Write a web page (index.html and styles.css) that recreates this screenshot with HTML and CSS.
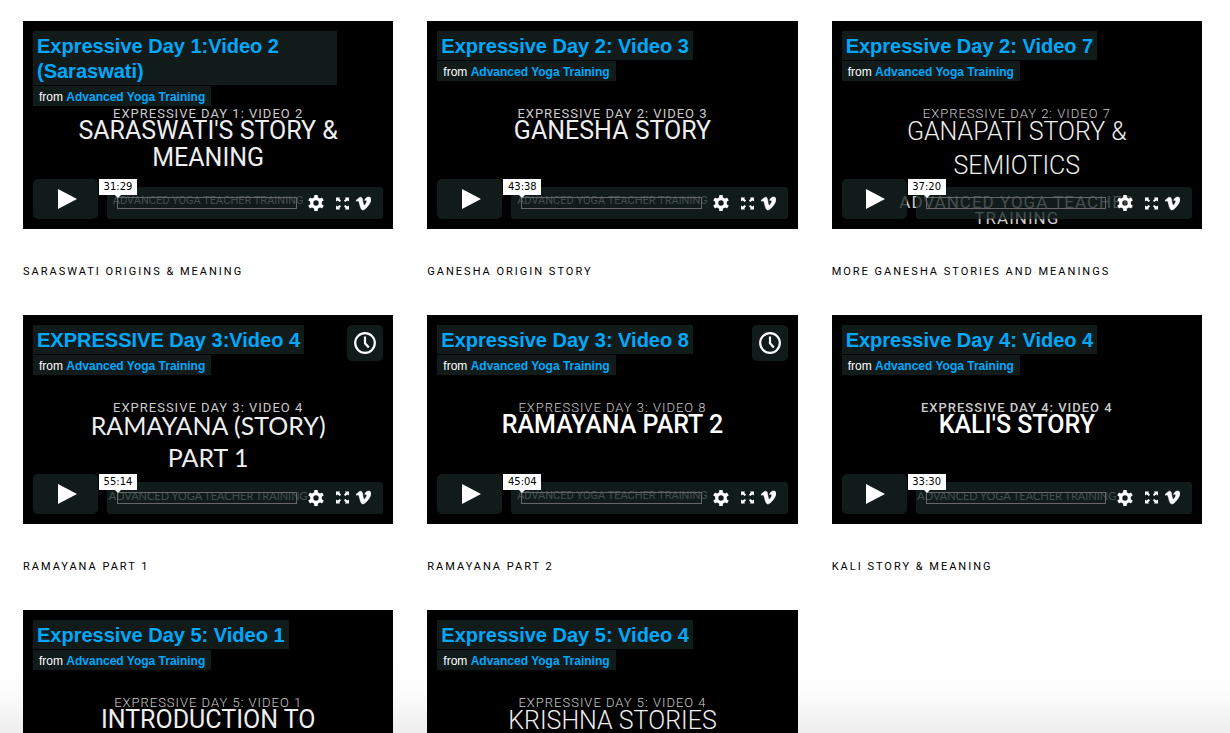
FILE: index.html
```html
<!DOCTYPE html>
<html lang="en">
<head>
<meta charset="utf-8">
<title>Advanced Yoga Training</title>
<link rel="stylesheet" href="styles.css">
</head>
<body>
<svg class="sprite" aria-hidden="true">
  <symbol id="play" viewBox="0 0 20 20"><path d="M0 0L19 10L0 20z"/></symbol>
  <symbol id="gear" viewBox="0 0 16 16">
    <circle cx="8" cy="8" r="4.3" fill="none" stroke="currentColor" stroke-width="3.2"/>
    <g id="teeth"><rect x="6.2" y="0" width="3.6" height="3.6" rx=".6"/><rect x="6.2" y="12.4" width="3.6" height="3.6" rx=".6"/></g>
    <use href="#teeth" transform="rotate(60 8 8)"/>
    <use href="#teeth" transform="rotate(120 8 8)"/>
  </symbol>
  <symbol id="expand" viewBox="0 0 13 13">
    <path d="M0 0.5h4L3.3 1.8 5 3.8 3.8 5 1.6 3.4 0 4.4zM13 0.5v3.9L11.4 3.4 9.2 5 8 3.8 9.7 1.8 9 0.5zM13 12.5H9L9.7 11.2 8 9.2 9.2 8 11.4 9.6 13 8.6zM0 12.5V8.6L1.6 9.6 3.8 8 5 9.2 3.3 11.2 4 12.5z"/>
  </symbol>
  <symbol id="vimeo" viewBox="0 0 24 24"><path stroke="currentColor" stroke-width=".8" d="M23.9765 6.4168c-.105 2.338-1.739 5.5429-4.894 9.6088-3.2679 4.247-6.0258 6.3699-8.2898 6.3699-1.409 0-2.578-1.294-3.553-3.881l-1.9179-7.1138c-.719-2.584-1.488-3.878-2.312-3.878-.179 0-.806.378-1.8809 1.132l-1.129-1.457a315.06 315.06 0 003.501-3.1279c1.579-1.368 2.765-2.085 3.5539-2.159 1.867-.18 3.016 1.1 3.447 3.838.465 2.953.789 4.789.971 5.5069.5389 2.45 1.1309 3.674 1.7759 3.674.502 0 1.256-.796 2.265-2.385 1.004-1.589 1.54-2.797 1.612-3.628.144-1.371-.395-2.061-1.614-2.061-.574 0-1.167.121-1.777.391 1.186-3.8679 3.434-5.7568 6.7619-5.6368 2.4729.06 3.6279 1.664 3.4929 4.7969z"/></symbol>
  <symbol id="clock" viewBox="0 0 22 22"><g fill="none" stroke="currentColor" stroke-width="2.2"><circle cx="11" cy="11" r="9.8"/><path d="M11 4.5V11.3L14.8 15.6"/></g></symbol>
</svg>

<main class="grid">
  <article class="item">
    <section class="player">
      <div class="thumb">
        <p class="eyebrow">EXPRESSIVE DAY 1: VIDEO 2</p>
        <p class="headline">SARASWATI'S STORY &amp;<br>MEANING</p>
        <p class="footer">ADVANCED YOGA TEACHER TRAINING</p>
      </div>
      <header class="top">
        <div class="titles">
          <h2 class="title"><a href="#">Expressive Day 1:Video 2 (Saraswati)</a></h2>
          <p class="byline">from <a href="#">Advanced Yoga Training</a></p>
        </div>
      </header>
      <div class="controls">
        <button class="play" aria-label="Play"><svg class="i-play"><use href="#play"/></svg></button>
        <div class="bar">
          <div class="progress"><span class="time">31:29</span></div>
          <button class="gear" aria-label="Settings"><svg class="i-gear"><use href="#gear"/></svg></button>
          <button class="expand" aria-label="Fullscreen"><svg class="i-expand"><use href="#expand"/></svg></button>
          <a class="vimeo" href="#" aria-label="Vimeo"><svg class="i-vimeo"><use href="#vimeo"/></svg></a>
        </div>
      </div>
    </section>
    <p class="caption">SARASWATI ORIGINS &amp; MEANING</p>
  </article>

  <article class="item">
    <section class="player">
      <div class="thumb">
        <p class="eyebrow">EXPRESSIVE DAY 2: VIDEO 3</p>
        <p class="headline">GANESHA STORY</p>
        <p class="footer">ADVANCED YOGA TEACHER TRAINING</p>
      </div>
      <header class="top">
        <div class="titles">
          <h2 class="title"><a href="#">Expressive Day 2: Video 3</a></h2>
          <p class="byline">from <a href="#">Advanced Yoga Training</a></p>
        </div>
      </header>
      <div class="controls">
        <button class="play" aria-label="Play"><svg class="i-play"><use href="#play"/></svg></button>
        <div class="bar">
          <div class="progress"><span class="time">43:38</span></div>
          <button class="gear" aria-label="Settings"><svg class="i-gear"><use href="#gear"/></svg></button>
          <button class="expand" aria-label="Fullscreen"><svg class="i-expand"><use href="#expand"/></svg></button>
          <a class="vimeo" href="#" aria-label="Vimeo"><svg class="i-vimeo"><use href="#vimeo"/></svg></a>
        </div>
      </div>
    </section>
    <p class="caption">GANESHA ORIGIN STORY</p>
  </article>

  <article class="item">
    <section class="player">
      <div class="thumb light open large-footer">
        <p class="eyebrow">EXPRESSIVE DAY 2: VIDEO 7</p>
        <p class="headline">GANAPATI STORY &amp;<br>SEMIOTICS</p>
        <p class="footer">ADVANCED YOGA TEACHER<br>TRAINING</p>
      </div>
      <header class="top">
        <div class="titles">
          <h2 class="title"><a href="#">Expressive Day 2: Video 7</a></h2>
          <p class="byline">from <a href="#">Advanced Yoga Training</a></p>
        </div>
      </header>
      <div class="controls">
        <button class="play" aria-label="Play"><svg class="i-play"><use href="#play"/></svg></button>
        <div class="bar">
          <div class="progress"><span class="time">37:20</span></div>
          <button class="gear" aria-label="Settings"><svg class="i-gear"><use href="#gear"/></svg></button>
          <button class="expand" aria-label="Fullscreen"><svg class="i-expand"><use href="#expand"/></svg></button>
          <a class="vimeo" href="#" aria-label="Vimeo"><svg class="i-vimeo"><use href="#vimeo"/></svg></a>
        </div>
      </div>
    </section>
    <p class="caption">MORE GANESHA STORIES AND MEANINGS</p>
  </article>

  <article class="item">
    <section class="player">
      <div class="thumb humanist">
        <p class="eyebrow">EXPRESSIVE DAY 3: VIDEO 4</p>
        <p class="headline">RAMAYANA (STORY)<br>PART 1</p>
        <p class="footer">ADVANCED YOGA TEACHER TRAINING</p>
      </div>
      <header class="top">
        <div class="titles">
          <h2 class="title"><a href="#">EXPRESSIVE Day 3:Video 4</a></h2>
          <p class="byline">from <a href="#">Advanced Yoga Training</a></p>
        </div>
        <button class="later" aria-label="Watch later"><svg class="i-clock"><use href="#clock"/></svg></button>
      </header>
      <div class="controls">
        <button class="play" aria-label="Play"><svg class="i-play"><use href="#play"/></svg></button>
        <div class="bar">
          <div class="progress"><span class="time">55:14</span></div>
          <button class="gear" aria-label="Settings"><svg class="i-gear"><use href="#gear"/></svg></button>
          <button class="expand" aria-label="Fullscreen"><svg class="i-expand"><use href="#expand"/></svg></button>
          <a class="vimeo" href="#" aria-label="Vimeo"><svg class="i-vimeo"><use href="#vimeo"/></svg></a>
        </div>
      </div>
    </section>
    <p class="caption">RAMAYANA PART 1</p>
  </article>

  <article class="item">
    <section class="player">
      <div class="thumb strong light-eyebrow">
        <p class="eyebrow">EXPRESSIVE DAY 3: VIDEO 8</p>
        <p class="headline">RAMAYANA PART 2</p>
        <p class="footer">ADVANCED YOGA TEACHER TRAINING</p>
      </div>
      <header class="top">
        <div class="titles">
          <h2 class="title"><a href="#">Expressive Day 3: Video 8</a></h2>
          <p class="byline">from <a href="#">Advanced Yoga Training</a></p>
        </div>
        <button class="later" aria-label="Watch later"><svg class="i-clock"><use href="#clock"/></svg></button>
      </header>
      <div class="controls">
        <button class="play" aria-label="Play"><svg class="i-play"><use href="#play"/></svg></button>
        <div class="bar">
          <div class="progress"><span class="time">45:04</span></div>
          <button class="gear" aria-label="Settings"><svg class="i-gear"><use href="#gear"/></svg></button>
          <button class="expand" aria-label="Fullscreen"><svg class="i-expand"><use href="#expand"/></svg></button>
          <a class="vimeo" href="#" aria-label="Vimeo"><svg class="i-vimeo"><use href="#vimeo"/></svg></a>
        </div>
      </div>
    </section>
    <p class="caption">RAMAYANA PART 2</p>
  </article>

  <article class="item">
    <section class="player">
      <div class="thumb strong humanist-footer">
        <p class="eyebrow">EXPRESSIVE DAY 4: VIDEO 4</p>
        <p class="headline">KALI'S STORY</p>
        <p class="footer">ADVANCED YOGA TEACHER TRAINING</p>
      </div>
      <header class="top">
        <div class="titles">
          <h2 class="title"><a href="#">Expressive Day 4: Video 4</a></h2>
          <p class="byline">from <a href="#">Advanced Yoga Training</a></p>
        </div>
      </header>
      <div class="controls">
        <button class="play" aria-label="Play"><svg class="i-play"><use href="#play"/></svg></button>
        <div class="bar">
          <div class="progress"><span class="time">33:30</span></div>
          <button class="gear" aria-label="Settings"><svg class="i-gear"><use href="#gear"/></svg></button>
          <button class="expand" aria-label="Fullscreen"><svg class="i-expand"><use href="#expand"/></svg></button>
          <a class="vimeo" href="#" aria-label="Vimeo"><svg class="i-vimeo"><use href="#vimeo"/></svg></a>
        </div>
      </div>
    </section>
    <p class="caption">KALI STORY &amp; MEANING</p>
  </article>

  <article class="item">
    <section class="player">
      <div class="thumb light-eyebrow">
        <p class="eyebrow">EXPRESSIVE DAY 5: VIDEO 1</p>
        <p class="headline">INTRODUCTION TO</p>
      </div>
      <header class="top">
        <div class="titles">
          <h2 class="title"><a href="#">Expressive Day 5: Video 1</a></h2>
          <p class="byline">from <a href="#">Advanced Yoga Training</a></p>
        </div>
      </header>
    </section>
  </article>

  <article class="item">
    <section class="player">
      <div class="thumb light open">
        <p class="eyebrow">EXPRESSIVE DAY 5: VIDEO 4</p>
        <p class="headline">KRISHNA STORIES</p>
      </div>
      <header class="top">
        <div class="titles">
          <h2 class="title"><a href="#">Expressive Day 5: Video 4</a></h2>
          <p class="byline">from <a href="#">Advanced Yoga Training</a></p>
        </div>
      </header>
    </section>
  </article>
</main>
</body>
</html>
```
FILE: styles.css
```css
:root {
  --panel: rgba(21, 36, 35, .75);
  --link: #00a8fa;
}
* { box-sizing: border-box; }
html {
  background: linear-gradient(#fff calc(100% - 72px), #fcfcfc calc(100% - 40px), #eee) fixed;
}
body { margin: 0; font-family: Roboto, sans-serif; }
p, h2 { margin: 0; }
a { color: var(--link); text-decoration: none; }
button { border: 0; padding: 0; background: none; color: #fff; cursor: pointer; }
svg { display: block; fill: currentColor; }
.sprite { position: absolute; width: 0; height: 0; }

.grid {
  display: grid;
  grid-template-columns: repeat(3, 1fr);
  column-gap: 34px;
  row-gap: 35px;
  padding: 21px 28px 35px 23px;
}
.caption {
  margin-top: 35px;
  font-size: 11px;
  line-height: 16px;
  letter-spacing: 2px;
  color: #000;
}

.player {
  position: relative;
  display: flex;
  flex-direction: column;
  justify-content: space-between;
  aspect-ratio: 16 / 9;
  padding: 10px;
  background: #000;
  overflow: hidden;
}

/* Title card shown behind the player controls */
.thumb {
  position: absolute;
  inset: 0;
  display: flex;
  flex-direction: column;
  padding: 86px 0 21px;
  text-align: center;
  color: #eee;
}
.eyebrow { font-size: 13px; line-height: 14px; letter-spacing: 1px; color: #ccc; }
.headline { margin-top: -4px; font-size: 25px; line-height: 27px; }
.footer { margin-top: auto; font-size: 11px; line-height: 14px; color: #ccc; }
.open .headline { margin-top: -6px; line-height: 34px; }
.humanist .headline { margin-top: -6px; line-height: 32px; }
.light, .light-eyebrow .eyebrow { font-weight: 300; }
.strong { font-weight: 500; color: #fff; }
.strong .footer { font-weight: 400; }
.humanist .headline, .humanist .footer, .humanist-footer .footer {
  font-family: Lato, sans-serif;
}
.large-footer { padding-bottom: 3px; }
.large-footer .footer { font-size: 17px; line-height: 16px; letter-spacing: 1px; font-weight: 400; }

.top, .controls {
  position: relative;
  display: flex;
  justify-content: space-between;
}
.titles {
  display: flex;
  flex-direction: column;
  align-items: flex-start;
  gap: 1px;
  max-width: 304px;
  font-family: "Helvetica Neue", "Liberation Sans", Arial, sans-serif;
}
.title {
  padding: 3px 4px 1px;
  background: var(--panel);
  font-size: 20px;
  line-height: 25px;
}
.byline {
  padding: 2px 6px 0;
  background: var(--panel);
  font-size: 12px;
  line-height: 18px;
  color: #fff;
}
.byline a { font-weight: bold; }
.later, .play { display: grid; place-items: center; background: var(--panel); border-radius: 5px; }
.later { width: 36px; height: 36px; }

.controls { align-items: flex-end; gap: 9px; }
.play { width: 65px; height: 40px; padding-left: 4px; }
.bar {
  flex: 1;
  display: flex;
  align-items: center;
  height: 32px;
  padding: 0 12px 0 10px;
  border-radius: 3px;
  background: var(--panel);
  color: #fff;
}
.progress {
  position: relative;
  flex: 1;
  height: 12px;
  border: 1px solid #666;
}
.time {
  position: absolute;
  left: -19px;
  bottom: 13px;
  width: 38px;
  background: #fff;
  font: 10px/16px "DejaVu Sans", Verdana, sans-serif;
  text-align: center;
  color: #000;
}
.time::after {
  content: "";
  position: absolute;
  top: 100%;
  left: 16px;
  border: 3px solid transparent;
  border-top-color: #fff;
  border-bottom: 0;
}
.gear { margin-left: 11px; }
.expand { margin-left: 12px; }
.vimeo { margin-left: 7px; color: #fff; }
.i-play { width: 20px; height: 20px; }
.i-gear { width: 16px; height: 16px; }
.i-expand { width: 13px; height: 13px; }
.i-vimeo { width: 15px; height: 15px; }
.i-clock { width: 22px; height: 22px; }
```
